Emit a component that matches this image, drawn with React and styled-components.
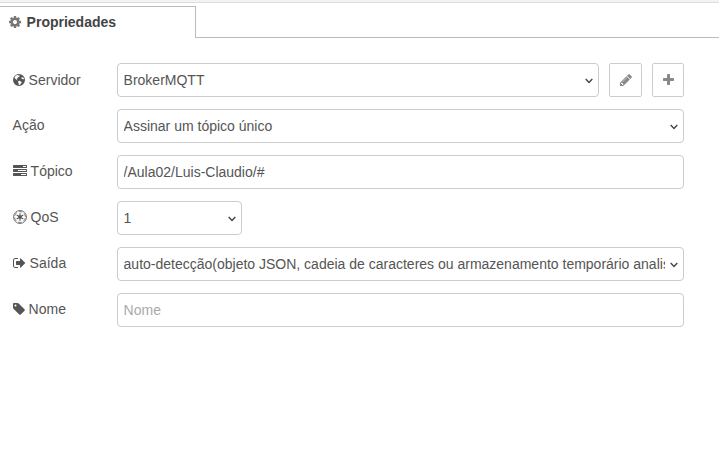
import React from "react";
import styled, { createGlobalStyle } from "styled-components";

const GlobalStyle = createGlobalStyle`
  * { box-sizing: border-box; }
  body {
    margin: 0;
    background: #fff;
    color: #555;
    font: 14px/20px "Liberation Sans", Arial, sans-serif;
    overflow: hidden;
  }
`;

const Panel = styled.main`
  height: 463px;
  background: #fff;
`;

const TopEdge = styled.div`
  height: 3px;
  background: #f3f3f3;
  border-bottom: 1px solid #ddd;
`;

const TabBar = styled.div`
  display: flex;
  height: 35px;
  padding-top: 3px;
`;

const Tab = styled.div`
  display: flex;
  align-items: center;
  width: 196px;
  padding: 0 0 2px 8.6px;
  border: 1px solid #bbb;
  border-width: 1px 1px 0 0;
  color: #444;
  font-weight: bold;
  svg { margin-right: 6px; color: #777; }
`;

const TabRest = styled.div`
  flex: 1;
  border-bottom: 1px solid #bbb;
`;

const Form = styled.form`
  display: flex;
  flex-direction: column;
  gap: 12px;
  width: 684px;
  padding: 25px 0 0 12.6px;
`;

const Row = styled.div`
  display: flex;
  height: 34px;
`;

const Label = styled.label`
  display: flex;
  align-items: center;
  width: 104.4px;
  height: ${(p) => p.$height || 32}px;
  svg { margin-right: 4px; }
`;

const SelectBox = styled.span`
  position: relative;
  display: block;
  width: ${(p) => p.$width || 567}px;
  height: 34px;
`;

const Select = styled.select`
  appearance: none;
  display: block;
  width: 100%;
  height: 34px;
  padding: 4px 18px 4px 5.6px;
  border: 1px solid #ccc;
  border-radius: 4px;
  background: #fff;
  color: #555;
  font: inherit;
`;

const Chevron = styled.svg`
  position: absolute;
  right: 6px;
  top: 15px;
  width: 8px;
  height: 6px;
  fill: none;
  stroke: #444;
  stroke-width: 1.4;
  pointer-events: none;
`;

const Input = styled.input`
  width: 567px;
  height: 34px;
  padding: 4px 5.6px;
  border: 1px solid #ccc;
  border-radius: 4px;
  background: #fff;
  color: #555;
  font: inherit;
  &::placeholder { color: #aaa; }
`;

const IconButton = styled.button`
  display: flex;
  align-items: center;
  justify-content: center;
  width: ${(p) => p.$width}px;
  height: 34px;
  margin-left: 10px;
  padding: 0 0 0 1px;
  border: 1px solid #ccc;
  border-radius: 2px;
  background: #fff;
  color: #888;
`;

const Glyph = styled.svg`
  display: block;
  flex: none;
  fill: currentColor;
  fill-rule: evenodd;
`;

const icons = {
  globe: { w: 12, h: 12, box: "0 0 12 12", d: "M6 0a6 6 0 1 0 0 12a6 6 0 1 0 0-12zM4.300 1.100L5.400 1.500L6.300 1.200L6.900 2L6 2.700L5.300 3.300L4.400 4.300L3.700 5.100L4.300 6L4.900 6.600L4.100 6.200L2.900 5.300L1.900 4.300L1.600 3.300Q2.500 1.700 4.300 1.100zM8.400 3.200L10.400 3.500Q11.100 4.600 11.100 5.800L10.500 5.100L9.700 5.300L8.500 4.600zM5.500 6.900L6.700 6.700L7.700 7.400L8.700 8.100L8.300 9.200L7.300 10.300L6.500 11.100L5.700 10.900L5.800 9.500L5 8.300z" },
  cog: { w: 12, h: 12, box: "0 -128 1536 1536", d: "M1024 640q0 106-75 181t-181 75-181-75-75-181 75-181 181-75 181 75 75 181zm512-109v222q0 12-8 23t-20 13l-185 28q-19 54-39 91 35 50 107 138 10 12 10 25t-9 23q-27 37-99 108t-94 71q-12 0-26-9l-138-108q-44 23-91 38-16 136-29 186-7 28-36 28h-222q-14 0-24.500-8.500t-11.500-21.500l-28-184q-49-16-90-37l-141 107q-10 9-25 9-14 0-25-11-126-114-165-168-7-10-7-23 0-12 8-23 15-21 51-66.500t54-70.500q-27-50-41-99l-183-27q-13-2-21-12.500t-8-23.500v-222q0-12 8-23t19-13l186-28q14-46 39-92-40-57-107-138-10-12-10-24 0-10 9-23 26-36 98.500-107.500t94.500-71.500q13 0 26 10l138 107q44-23 91-38 16-136 29-186 7-28 36-28h222q14 0 24.500 8.500t11.500 21.500l28 184q49 16 90 37l142-107q9-9 24-9 13 0 25 10 129 119 165 170 7 8 7 22 0 12-8 23-15 21-51 66.500t-54 70.500q26 50 41 98l183 28q13 2 21 12.500t8 23.500z" },
  pencil: { w: 12, h: 14, box: "128 0 1536 1792", d: "M491 1536l91-91-235-235-91 91v107h128v128h107zm523-928q0-22-22-22-10 0-17 7l-542 542q-7 7-7 17 0 22 22 22 10 0 17-7l542-542q7-7 7-17zm-54-192l416 416-832 832h-416v-416zm683 96q0 53-37 90l-166 166-416-416 166-165q36-38 90-38 53 0 91 38l235 234q37 39 37 91z" },
  plus: { w: 11, h: 14, box: "192 0 1408 1792", d: "M1600 736v192q0 40-28 68t-68 28h-416v416q0 40-28 68t-68 28h-192q-40 0-68-28t-28-68v-416h-416q-40 0-68-28t-28-68v-192q0-40 28-68t68-28h416v-416q0-40 28-68t68-28h192q40 0 68 28t28 68v416h416q40 0 68 28t28 68z" },
  tasks: { w: 14, h: 14, box: "0 0 1792 1792", d: "M1024 1408h640v-128h-640v128zm-384-512h1024v-128h-1024v128zm640-512h384v-128h-384v128zm512 832v256q0 26-19 45t-45 19h-1664q-26 0-45-19t-19-45v-256q0-26 19-45t45-19h1664q26 0 45 19t19 45zm0-512v256q0 26-19 45t-45 19h-1664q-26 0-45-19t-19-45v-256q0-26 19-45t45-19h1664q26 0 45 19t19 45zm0-512v256q0 26-19 45t-45 19h-1664q-26 0-45-19t-19-45v-256q0-26 19-45t45-19h1664q26 0 45 19t19 45z" },
  signOut: { w: 13, h: 14, box: "64 0 1664 1792", d: "M704 1440q0 4 1 20t.5 26.500-3 23.500-10 19.500-20.500 6.500h-320q-119 0-203.500-84.500t-84.500-203.500v-704q0-119 84.500-203.500t203.500-84.500h320q13 0 22.500 9.500t9.500 22.500q0 4 1 20t.5 26.500-3 23.500-10 19.500-20.500 6.500h-320q-66 0-113 47t-47 113v704q0 66 47 113t113 47h312l11.500 1 11.500 3 8 5.500 7 9 2 13.500zm928-544q0 26-19 45l-544 544q-19 19-45 19t-45-19-19-45v-288h-448q-26 0-45-19t-19-45v-384q0-26 19-45t45-19h448v-288q0-26 19-45t45-19 45 19l544 544q19 19 19 45z" },
  tag: { w: 12, h: 14, box: "128 0 1536 1792", d: "M576 448q0-53-37.500-90.500t-90.500-37.500-90.500 37.500-37.500 90.500 37.500 90.500 90.500 37.500 90.500-37.500 37.500-90.500zm1067 576q0 53-37 90l-491 492q-39 37-91 37-53 0-90-37l-715-716q-38-37-64.500-101t-26.500-117v-416q0-52 38-90t90-38h416q53 0 117 26.500t102 64.500l715 714q37 39 37 91z" },
};

function Icon({ name }) {
  const { w, h, box, d } = icons[name];
  return (
    <Glyph width={w} height={h} viewBox={box} aria-hidden="true">
      <path d={d} />
    </Glyph>
  );
}

function EmpireIcon() {
  return (
    <Glyph width="14" height="14" viewBox="0 0 14 14" aria-hidden="true">
      <g fill="none" stroke="currentColor">
        <circle cx="7" cy="7" r="6.500" strokeWidth="0.800" />
        <circle cx="7" cy="7" r="5.400" strokeWidth="0.800" strokeDasharray="3.650 2" strokeDashoffset="-1" />
        <path d="M7 3.200V10.800M3.700 5.100L10.300 8.900M3.700 8.900L10.300 5.100" strokeWidth="1.100" />
      </g>
      <circle cx="7" cy="7" r="1.700" />
    </Glyph>
  );
}

function Dropdown({ width, children }) {
  return (
    <SelectBox $width={width}>
      <Select><option>{children}</option></Select>
      <Chevron viewBox="0 0 8 6" aria-hidden="true"><path d="M0.7 1L4 4.500L7.300 1" /></Chevron>
    </SelectBox>
  );
}

export default function App() {
  return (
    <Panel>
      <GlobalStyle />
      <TopEdge />
      <TabBar>
        <Tab><Icon name="cog" />Propriedades</Tab>
        <TabRest />
      </TabBar>
      <Form>
        <Row>
          <Label $height={34}><Icon name="globe" />Servidor</Label>
          <Dropdown width={482}>BrokerMQTT</Dropdown>
          <IconButton type="button" $width={33} aria-label="Editar"><Icon name="pencil" /></IconButton>
          <IconButton type="button" $width={32} aria-label="Adicionar"><Icon name="plus" /></IconButton>
        </Row>
        <Row>
          <Label>Ação</Label>
          <Dropdown>Assinar um tópico único</Dropdown>
        </Row>
        <Row>
          <Label><Icon name="tasks" />Tópico</Label>
          <Input defaultValue="/Aula02/Luis-Claudio/#" />
        </Row>
        <Row>
          <Label><EmpireIcon />QoS</Label>
          <Dropdown width={125}>1</Dropdown>
        </Row>
        <Row>
          <Label><Icon name="signOut" />Saída</Label>
          <Dropdown>auto-detecção(objeto JSON, cadeia de caracteres ou armazenamento temporário analisado)</Dropdown>
        </Row>
        <Row>
          <Label><Icon name="tag" />Nome</Label>
          <Input placeholder="Nome" />
        </Row>
      </Form>
    </Panel>
  );
}
